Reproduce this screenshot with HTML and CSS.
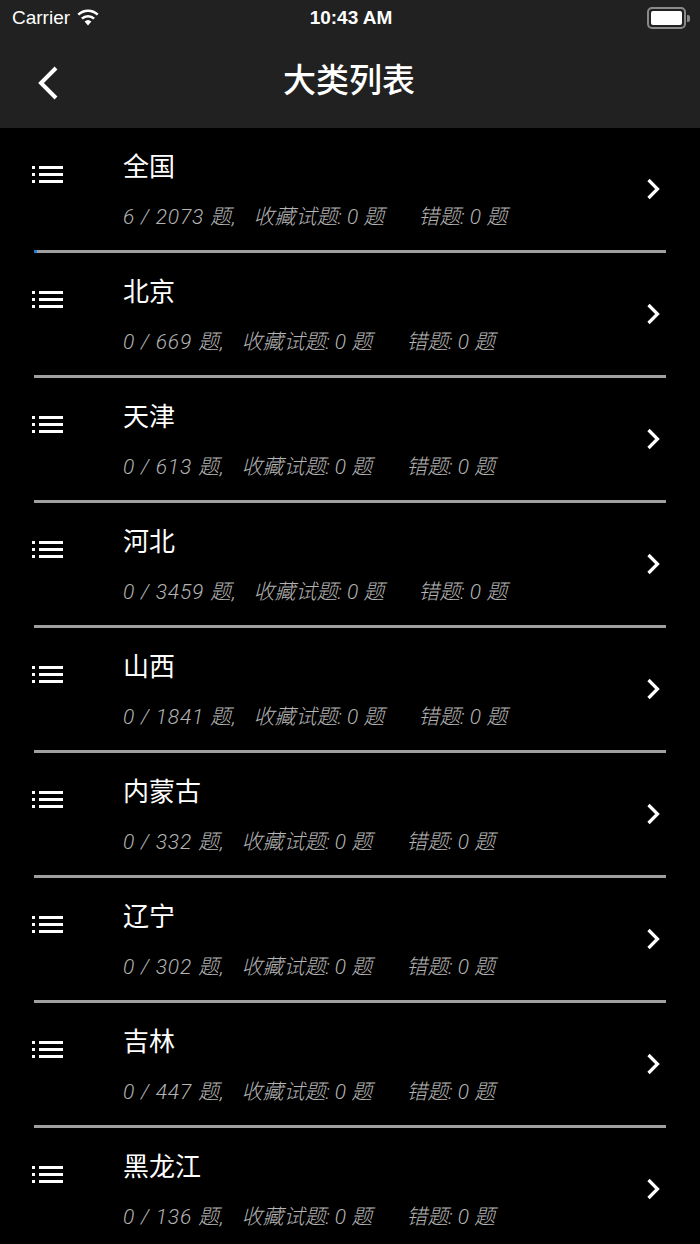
FILE: index.html
```html
<!DOCTYPE html>
<html lang="zh-CN">
<head>
    <meta charset="UTF-8">
    <meta name="viewport" content="width=device-width, initial-scale=1.0">
    <title>大类列表</title>
    <link rel="stylesheet" href="styles.css">
</head>
<body>
    <div class="header">
        <div class="status-bar">
            <div class="carrier">
                Carrier
                <svg class="wifi" width="24" height="18" viewBox="0 0 24 18">
                    <path d="M12 17.5 L8.6 13.6 A5 5 0 0 1 15.4 13.6 Z" fill="#fff"/>
                    <path d="M5.9 10.6 A9 9 0 0 1 18.1 10.6" stroke="#fff" stroke-width="2.6" fill="none"/>
                    <path d="M2.3 6.6 A14 14 0 0 1 21.7 6.6" stroke="#fff" stroke-width="2.6" fill="none"/>
                </svg>
            </div>
            <div class="time">10:43 AM</div>
            <div class="battery">
                <div class="battery-body"><div class="battery-level"></div></div>
                <div class="battery-nub"></div>
            </div>
        </div>
        <div class="nav-bar">
            <svg class="back" width="22" height="34" viewBox="0 0 22 34">
                <path d="M19 2 L4 17 L19 32" stroke="#fff" stroke-width="4" fill="none"/>
            </svg>
            <h1>大类列表</h1>
        </div>
    </div>

    <div class="list" id="list"></div>

    <script>
        const items = [
            { name: '全国', done: 6, total: 2073 },
            { name: '北京', done: 0, total: 669 },
            { name: '天津', done: 0, total: 613 },
            { name: '河北', done: 0, total: 3459 },
            { name: '山西', done: 0, total: 1841 },
            { name: '内蒙古', done: 0, total: 332 },
            { name: '辽宁', done: 0, total: 302 },
            { name: '吉林', done: 0, total: 447 },
            { name: '黑龙江', done: 0, total: 136 }
        ];

        const listIcon = `
            <svg class="list-icon" width="32" height="18" viewBox="0 0 32 18">
                <rect x="0" y="0" width="3" height="3" fill="#fff"/>
                <rect x="0" y="7" width="3" height="3" fill="#fff"/>
                <rect x="0" y="14" width="3" height="3" fill="#fff"/>
                <rect x="7" y="0" width="24" height="3" fill="#fff"/>
                <rect x="7" y="7" width="24" height="3" fill="#fff"/>
                <rect x="7" y="14" width="24" height="3" fill="#fff"/>
            </svg>`;

        const chevron = `
            <svg class="chevron" width="14" height="22" viewBox="0 0 14 22">
                <path d="M2.5 2 L11.5 11 L2.5 20" stroke="#fff" stroke-width="3.2" fill="none"/>
            </svg>`;

        const list = document.getElementById('list');
        items.forEach((item, i) => {
            const row = document.createElement('div');
            row.className = 'row';
            row.innerHTML = `
                <div class="cell">
                    ${listIcon}
                    <div class="text">
                        <div class="name">${item.name}</div>
                        <div class="stats"><span class="count">${item.done} / ${item.total} 题,</span><span class="fav">收藏试题: 0 题</span><span class="wrong">错题: 0 题</span></div>
                    </div>
                    ${chevron}
                </div>
                <div class="sep${i === 0 ? ' first' : ''}"></div>`;
            list.appendChild(row);
        });
    </script>
</body>
</html>
```

FILE: styles.css
```css
body { margin: 0; background-color: #000; color: #fff; font-family: "Noto Sans", "Noto Sans CJK SC", sans-serif; width: 700px; height: 1244px; overflow: hidden; }

.header { background-color: #212121; height: 128px; }
.status-bar { height: 36px; display: flex; align-items: center; justify-content: space-between; padding: 0 10px 0 12px; font-family: "Liberation Sans", sans-serif; font-size: 19px; }
.carrier { display: flex; align-items: center; gap: 6px; width: 140px; }
.wifi { margin-top: -2px; }
.time { font-weight: bold; }
.battery { display: flex; align-items: center; width: 140px; justify-content: flex-end; }
.battery-body { width: 31px; height: 14px; border: 2px solid #8a8a8a; border-radius: 5px; padding: 2px; }
.battery-level { width: 100%; height: 100%; background-color: #fff; border-radius: 2px; }
.battery-nub { width: 3px; height: 7px; background-color: #8a8a8a; border-radius: 0 2px 2px 0; margin-left: 1px; }

.nav-bar { height: 92px; display: flex; align-items: center; justify-content: center; position: relative; }
.nav-bar h1 { margin: 0 0 0 -2px; font-size: 33px; font-weight: 500; font-family: "Noto Sans CJK SC", sans-serif; margin-top: -9px; }
.back { position: absolute; left: 37px; top: 30px; }

.cell { height: 122px; display: flex; align-items: flex-start; position: relative; }
.list-icon { margin: 38px 0 0 32px; flex: none; }
.text { margin-left: 59px; padding-top: 19px; flex: 1; }
.name { font-size: 26px; line-height: 36px; font-family: "Noto Sans CJK SC", sans-serif; }
.stats { margin-top: 21px; font-family: Roboto, "Noto Sans CJK SC", sans-serif; font-size: 21px; line-height: 26px; font-style: italic; font-weight: 300; color: #b4b4b4; white-space: nowrap; }
.count { letter-spacing: 0.8px; }
.fav { margin-left: 17px; }
.wrong { margin-left: 34px; }
.chevron { position: absolute; right: 40px; top: 50px; }

.sep { height: 3px; margin: 0 34px; background-color: #a0a0a0; }
.sep.first { border-left: 3px solid #1e7fe0; }
```
